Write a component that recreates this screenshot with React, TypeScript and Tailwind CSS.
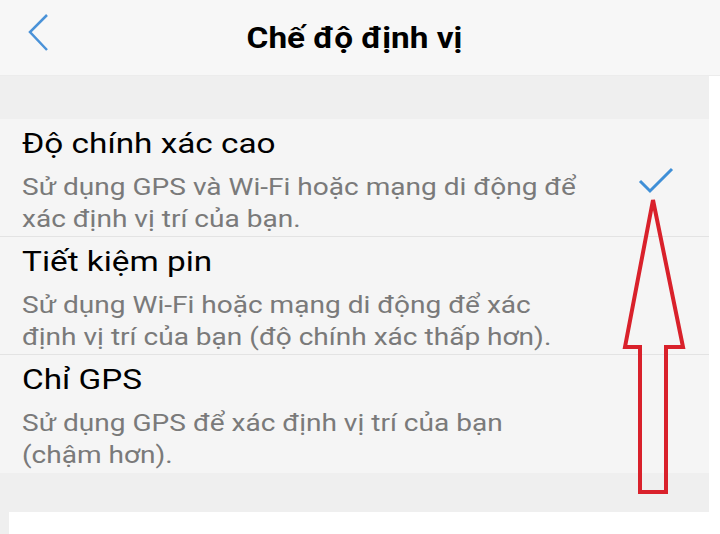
import React from "react";

interface Mode {
  title: string;
  lines: string[];
  checked?: boolean;
}

const modes: Mode[] = [
  {
    title: "Độ chính xác cao",
    lines: ["Sử dụng GPS và Wi-Fi hoặc mạng di động để", "xác định vị trí của bạn."],
    checked: true,
  },
  {
    title: "Tiết kiệm pin",
    lines: ["Sử dụng Wi-Fi hoặc mạng di động để xác", "định vị trí của bạn (độ chính xác thấp hơn)."],
  },
  {
    title: "Chỉ GPS",
    lines: ["Sử dụng GPS để xác định vị trí của bạn", "(chậm hơn)."],
  },
];

function ModeRow({ mode, last }: { mode: Mode; last: boolean }) {
  return (
    <div className={`flex items-start h-[118px] pl-[22px] pr-[35px] pt-[7px] ${last ? "" : "border-b border-[#e3e3e3]"}`}>
      <div className="flex-1 whitespace-nowrap">
        <div className="text-[28px] leading-[36px] text-black origin-left scale-x-[1.19]">{mode.title}</div>
        <div className="text-[23px] leading-[32px] text-[#7a7a7a] mt-[10px] origin-left scale-x-[1.22]">
          {mode.lines.map((l) => (
            <div key={l}>{l}</div>
          ))}
        </div>
      </div>
      {mode.checked && (
        <svg width="36" height="28" viewBox="0 0 36 28" className="mt-[41px]">
          <polyline points="2,14 12,24 34,2" fill="none" stroke="#3f8fd7" strokeWidth="3" />
        </svg>
      )}
    </div>
  );
}

export default function App() {
  return (
    <div
      className="relative w-[720px] h-[534px] overflow-hidden bg-white flex flex-col"
      style={{ fontFamily: "Roboto, 'Noto Sans', sans-serif" }}
    >
      {/* header */}
      <div className="h-[76px] bg-[#f7f7f7] border-b border-[#ececec] flex items-center relative">
        <svg width="24" height="40" viewBox="0 0 24 40" className="absolute left-[27px] top-[13px]">
          <polyline points="20,2 3,19 20,37" fill="none" stroke="#4a92d8" strokeWidth="2.5" />
        </svg>
        <div className="w-[709px] text-center text-[30px] font-bold text-black scale-x-[1.11]">Chế độ định vị</div>
      </div>

      <div className="flex flex-1">
        <div className="w-[709px] flex flex-col">
          <div className="h-[43px] bg-[#efefef]" />
          <div className="bg-[#f5f5f5]">
            {modes.map((m, i) => (
              <ModeRow key={m.title} mode={m} last={i === modes.length - 1} />
            ))}
          </div>
          <div className="h-[39px] bg-[#efefef]" />
          <div className="flex-1 bg-[#efefef] pl-[9px]">
            <div className="h-full bg-white" />
          </div>
        </div>
        <div className="flex-1 bg-white" />
      </div>

      {/* red annotation arrow */}
      <svg width="720" height="534" className="absolute left-0 top-0 pointer-events-none">
        <polygon
          points="653,200 683,347 666,347 666,492 640,492 640,347 625,347"
          fill="none"
          stroke="#d9212b"
          strokeWidth="4"
        />
      </svg>
    </div>
  );
}
